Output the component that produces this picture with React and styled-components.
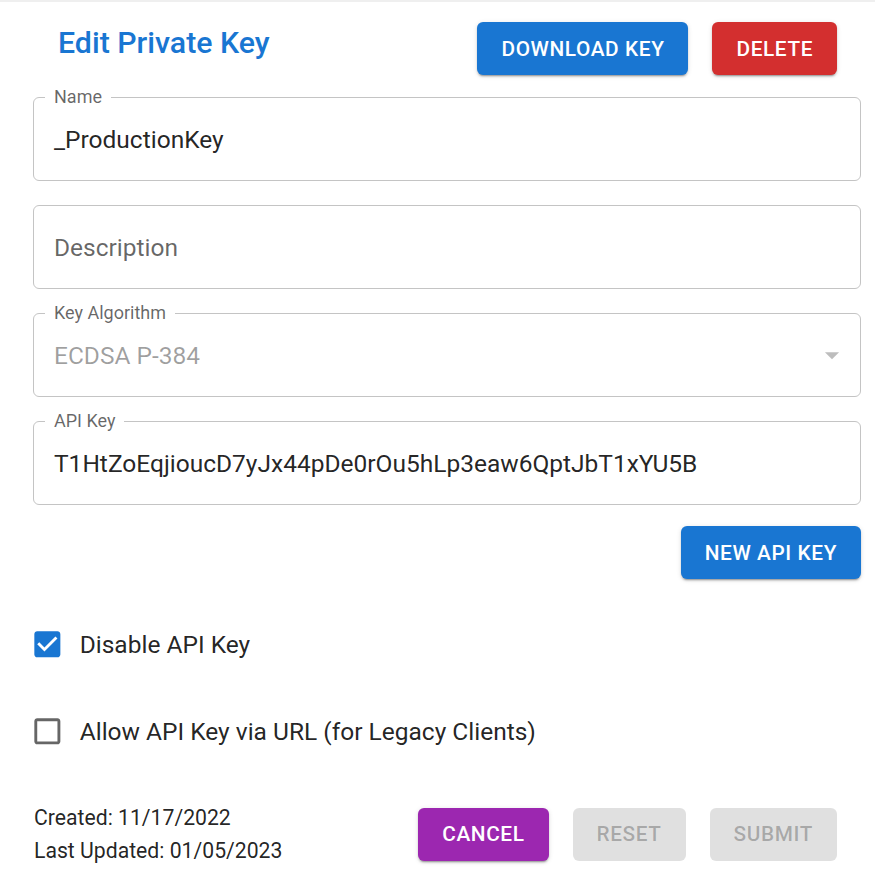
import React from "react";
import styled, { createGlobalStyle } from "styled-components";

const GlobalStyle = createGlobalStyle`
  body {
    margin: 0;
    background: #fff;
    font-family: Roboto, "Liberation Sans", Arial, sans-serif;
  }
  * {
    box-sizing: border-box;
  }
`;

const colors = {
  primary: "#1976d2",
  error: "#d32f2f",
  secondary: "#9c27b0",
  text: "rgba(0, 0, 0, 0.87)",
  textSecondary: "rgba(0, 0, 0, 0.6)",
  textDisabled: "rgba(0, 0, 0, 0.38)",
  border: "#c4c4c4",
};

const Page = styled.div`
  width: 875px;
  min-height: 873px;
  border-top: 2px solid #efefef;
  padding: 0 14px 0 33px;
`;

const Header = styled.div`
  display: flex;
  align-items: center;
  height: 53px;
  margin-top: 20px;
  padding: 0 24px 0 25px;
  gap: 24px;
`;

const Title = styled.h1`
  flex: 1;
  margin: 0 0 12px;
  font-size: 30.3px;
  font-weight: 500;
  color: ${colors.primary};
`;

const Button = styled.button`
  height: 53px;
  padding: 0 24px;
  border: none;
  border-radius: 6px;
  font-family: Roboto, "Liberation Sans", Arial, sans-serif;
  font-size: 20.8px;
  font-weight: 500;
  letter-spacing: 0.6px;
  text-transform: uppercase;
  cursor: pointer;
  color: ${(p) => (p.disabled ? "rgba(0, 0, 0, 0.26)" : "#fff")};
  background: ${(p) => (p.disabled ? "rgba(0, 0, 0, 0.12)" : p.$bg)};
  box-shadow: ${(p) =>
    p.disabled
      ? "none"
      : "0px 3px 1px -2px rgba(0,0,0,0.2), 0px 2px 2px 0px rgba(0,0,0,0.14), 0px 1px 5px 0px rgba(0,0,0,0.12)"};
`;

const Form = styled.div`
  display: flex;
  flex-direction: column;
  gap: 24px;
  margin-top: 22px;
`;

const Field = styled.div`
  position: relative;
  display: flex;
  align-items: center;
  height: 84px;
  padding: 0 20px;
  border: 1px solid ${colors.border};
  border-radius: 6px;
`;

const FloatLabel = styled.span`
  position: absolute;
  top: -11px;
  left: 11px;
  padding: 0 9px;
  background: #fff;
  font-size: 18px;
  line-height: 20px;
  color: ${colors.textSecondary};
`;

const Value = styled.span`
  flex: 1;
  font-size: 24.5px;
  color: ${(p) =>
    p.$tone === "disabled"
      ? colors.textDisabled
      : p.$tone === "placeholder"
      ? colors.textSecondary
      : colors.text};
`;

const ArrowIcon = styled.svg`
  width: 34px;
  height: 34px;
  margin-right: -9px;
  fill: rgba(0, 0, 0, 0.26);
`;

const ActionRow = styled.div`
  display: flex;
  justify-content: flex-end;
  margin-top: 21px;
`;

const CheckRow = styled.label`
  display: flex;
  align-items: center;
  height: 40px;
  margin-top: ${(p) => p.$top}px;
  font-size: 24.5px;
  color: ${colors.text};
`;

const CheckIcon = styled.svg`
  width: 34.7px;
  height: 34.7px;
  margin-left: -3px;
  margin-right: 15px;
  fill: ${(p) => (p.$checked ? colors.primary : colors.textSecondary)};
`;

const Footer = styled.div`
  display: flex;
  align-items: center;
  margin-top: 50px;
  padding-right: 24px;
`;

const Dates = styled.div`
  flex: 1;
  padding-left: 1px;
  font-size: 21.2px;
  line-height: 33px;
  color: ${colors.text};
`;

const FooterButtons = styled.div`
  display: flex;
  gap: 24px;
`;

const CHECKED =
  "M19 3H5c-1.11 0-2 .9-2 2v14c0 1.1.89 2 2 2h14c1.11 0 2-.9 2-2V5c0-1.1-.89-2-2-2zm-9 14l-5-5 1.41-1.41L10 14.17l7.59-7.59L19 8l-9 9z";
const UNCHECKED =
  "M19 5v14H5V5h14m0-2H5c-1.1 0-2 .9-2 2v14c0 1.1.9 2 2 2h14c1.1 0 2-.9 2-2V5c0-1.1-.9-2-2-2z";

const Checkbox = ({ checked, label, top }) => (
  <CheckRow $top={top}>
    <CheckIcon viewBox="0 0 24 24" $checked={checked}>
      {checked && <rect x="5" y="5" width="14" height="14" fill="#fff" />}
      <path d={checked ? CHECKED : UNCHECKED} />
    </CheckIcon>
    {label}
  </CheckRow>
);

export default function App() {
  return (
    <>
      <GlobalStyle />
      <Page>
        <Header>
          <Title>Edit Private Key</Title>
          <Button $bg={colors.primary}>Download Key</Button>
          <Button $bg={colors.error}>Delete</Button>
        </Header>

        <Form>
          <Field>
            <FloatLabel>Name</FloatLabel>
            <Value>_ProductionKey</Value>
          </Field>
          <Field>
            <Value $tone="placeholder">Description</Value>
          </Field>
          <Field>
            <FloatLabel>Key Algorithm</FloatLabel>
            <Value $tone="disabled">ECDSA P-384</Value>
            <ArrowIcon viewBox="0 0 24 24">
              <path d="M7 10l5 5 5-5z" />
            </ArrowIcon>
          </Field>
          <Field>
            <FloatLabel>API Key</FloatLabel>
            <Value>T1HtZoEqjioucD7yJx44pDe0rOu5hLp3eaw6QptJbT1xYU5B</Value>
          </Field>
        </Form>

        <ActionRow>
          <Button $bg={colors.primary}>New API Key</Button>
        </ActionRow>

        <Checkbox checked top={45} label="Disable API Key" />
        <Checkbox top={47} label="Allow API Key via URL (for Legacy Clients)" />

        <Footer>
          <Dates>
            <div>Created: 11/17/2022</div>
            <div>Last Updated: 01/05/2023</div>
          </Dates>
          <FooterButtons>
            <Button $bg={colors.secondary}>Cancel</Button>
            <Button disabled>Reset</Button>
            <Button disabled>Submit</Button>
          </FooterButtons>
        </Footer>
      </Page>
    </>
  );
}
